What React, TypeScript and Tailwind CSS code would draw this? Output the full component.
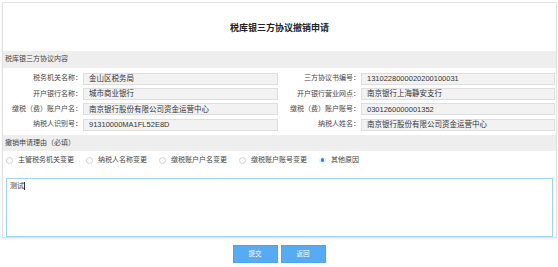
import React from "react";

const ROWS = [
  ["税务机关名称：", "金山区税务局", "三方协议书编号：", "1310228000020200100031"],
  ["开户银行名称：", "城市商业银行", "开户银行营业网点：", "南京银行上海静安支行"],
  ["缴税（费）账户户名：", "南京银行股份有限公司资金运营中心", "缴税（费）账户账号：", "0301260000001352"],
  ["纳税人识别号：", "91310000MA1FL52E8D", "纳税人姓名：", "南京银行股份有限公司资金运营中心"],
];

const REASONS = ["主管税务机关变更", "纳税人名称变更", "缴税账户户名变更", "缴税账户账号变更", "其他原因"];

export default function App() {
  return (
    <div
      className="w-[558px] h-[267px] bg-white text-[#444] overflow-hidden"
      style={{ fontFamily: '"Liberation Sans", "Noto Sans CJK SC", sans-serif' }}
    >
      <div className="ml-[2px] mr-[1px] mt-[2px] border border-[#e2e2e2] shadow-[0_1px_2px_rgba(0,0,0,0.08)]">
        {/* title */}
        <div className="h-[48px] flex items-center justify-center pt-[4px]">
          <h1 className="text-[9px] font-bold text-[#222]">税库银三方协议撤销申请</h1>
        </div>

        {/* section 1 */}
        <div className="h-[17px] bg-[#eeeeee] flex items-center px-[2px] text-[7px]">税库银三方协议内容</div>
        <div className="pt-[3px] pb-[2px]">
          {ROWS.map((r) => (
            <div key={r[0]} className="grid grid-cols-[80px_195px_83px_194px] h-[15.3px] items-center text-[7px]">
              <div className="text-right pr-[1px]">{r[0]}</div>
              <div className="h-[12px] border border-[#dedede] bg-[#f2f2f2] flex items-center px-[5px] text-[7.5px] text-[#333]">
                {r[1]}
              </div>
              <div className="text-right pr-[1px]">{r[2]}</div>
              <div className="h-[12px] border border-[#dedede] bg-[#f2f2f2] flex items-center px-[5px] text-[7.5px] text-[#333]">
                {r[3]}
              </div>
            </div>
          ))}
        </div>

        {/* section 2 */}
        <div className="h-[16px] mt-[1px] bg-[#eeeeee] flex items-center px-[2px] text-[7px]">撤销申请理由（必填）</div>
        <div className="h-[18px] flex items-center gap-[12px] pl-[3px] text-[7px]">
          {REASONS.map((t, i) => (
            <label key={t} className="flex items-center gap-[5px]">
              {i === 4 ? (
                <span className="w-[7px] h-[7px] rounded-full bg-[#e8f2fb] flex items-center justify-center">
                  <span className="w-[3.5px] h-[3.5px] rounded-full bg-[#1e88e5]" />
                </span>
              ) : (
                <span className="w-[7px] h-[7px] rounded-full border border-[#d0d0d0] bg-white" />
              )}
              <span>{t}</span>
            </label>
          ))}
        </div>
        <div className="px-[3px] pt-[9px]">
          <div className="h-[59px] border border-[#9fd3f3] bg-white px-[3px] py-[2px] text-[7px] text-[#333]">
            测试<span className="inline-block w-px h-[8px] bg-[#333] align-middle" />
          </div>
        </div>
      </div>

      {/* buttons */}
      <div className="flex justify-center gap-[3px] mt-[7px]">
        <button className="w-[45px] h-[18px] bg-[#56abf5] text-white text-[6.5px] border border-[#4da3ef]">提交</button>
        <button className="w-[45px] h-[18px] bg-[#56abf5] text-white text-[6.5px] border border-[#4da3ef]">返回</button>
      </div>
    </div>
  );
}
